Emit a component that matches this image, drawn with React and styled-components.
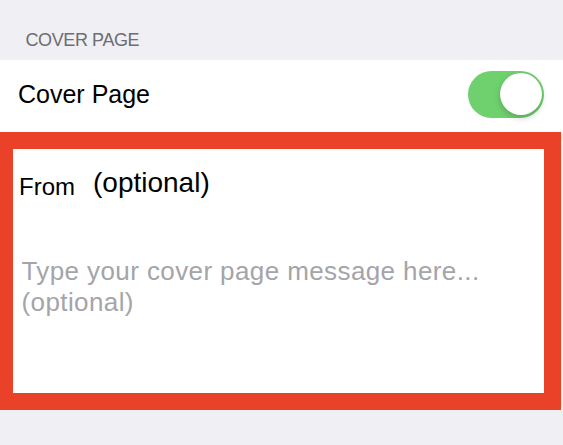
import React, { useState } from "react";
import styled, { createGlobalStyle } from "styled-components";

const GlobalStyle = createGlobalStyle`
  html, body {
    margin: 0;
    padding: 0;
    background: #efeff4;
    font-family: "Liberation Sans", Arial, sans-serif;
  }
`;

const Page = styled.div`
  width: 563px;
  height: 445px;
  background: #efeff4;
  overflow: hidden;
`;

const SectionHeader = styled.div`
  box-sizing: border-box;
  height: 60px;
  padding: 29.5px 0 0 25.5px;
  font-size: 18px;
  line-height: 20px;
  color: #6d6d72;
  letter-spacing: -0.4px;
`;

const Row = styled.div`
  box-sizing: border-box;
  height: 72px;
  display: flex;
  align-items: center;
  justify-content: space-between;
  padding: 0 19px 4px 18px;
  background: #fff;
`;

const RowLabel = styled.span`
  font-size: 25px;
  line-height: 30px;
  color: #000;
`;

const Switch = styled.button`
  position: relative;
  width: 76px;
  height: 47px;
  padding: 0;
  border: none;
  border-radius: 24px;
  background: ${(p) => (p.$on ? "#6fd06e" : "#e5e5ea")};
  cursor: pointer;
`;

const Knob = styled.span`
  position: absolute;
  top: 2px;
  left: ${(p) => (p.$on ? "32px" : "2px")};
  width: 42px;
  height: 42px;
  border-radius: 50%;
  background: #fff;
  box-shadow: 0 3px 6px rgba(0, 0, 0, 0.18), 0 0 1px rgba(0, 0, 0, 0.15);
`;

const Frame = styled.div`
  box-sizing: border-box;
  width: 561px;
  height: 278px;
  border: 17px solid #ea4129;
  border-left-width: 13px;
  background: #fff;
  display: flex;
  flex-direction: column;
`;

const FromRow = styled.div`
  display: flex;
  align-items: flex-start;
  padding-left: 6px;
`;

const FromLabel = styled.span`
  margin-top: ${(p) => p.$top}px;
  margin-right: ${(p) => p.$gap || 0}px;
  font-size: ${(p) => p.$size}px;
  line-height: 30px;
  color: #000;
`;

const Message = styled.textarea`
  box-sizing: border-box;
  margin: 54.5px 0 0 8.5px;
  padding: 0;
  border: none;
  outline: none;
  resize: none;
  background: transparent;
  width: 500px;
  height: 70px;
  font-family: "Liberation Sans", Arial, sans-serif;
  font-size: 26px;
  line-height: 31px;
  letter-spacing: 0.4px;
  color: #000;
  &::placeholder {
    color: #a4a4a9;
    opacity: 1;
  }
`;

const App = () => {
  const [coverOn, setCoverOn] = useState(true);

  return (
    <Page>
      <GlobalStyle />
      <SectionHeader>COVER PAGE</SectionHeader>
      <Row>
        <RowLabel>Cover Page</RowLabel>
        <Switch $on={coverOn} onClick={() => setCoverOn(!coverOn)}>
          <Knob $on={coverOn} />
        </Switch>
      </Row>
      <Frame>
        <FromRow>
          <FromLabel $top={22.7} $size={24} $gap={18}>
            From
          </FromLabel>
          <FromLabel $top={19.3} $size={28}>
            (optional)
          </FromLabel>
        </FromRow>
        <Message placeholder="Type your cover page message here... (optional)" />
      </Frame>
    </Page>
  );
};

export default App;
